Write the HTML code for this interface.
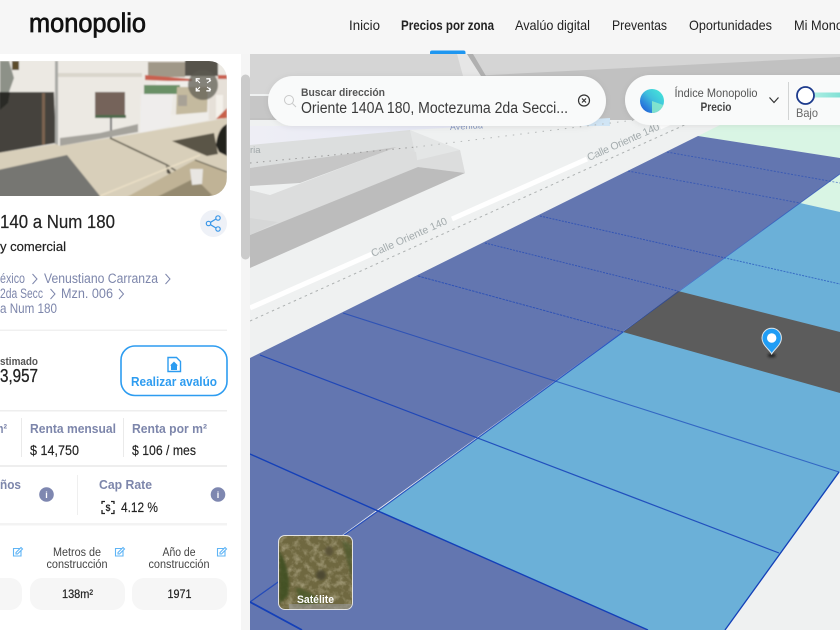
<!DOCTYPE html>
<html lang="es"><head><meta charset="utf-8"><title>Monopolio</title>
<style>
html,body{margin:0;padding:0;width:840px;height:630px;overflow:hidden;background:#fff}
svg{display:block}
text{font-family:"Liberation Sans",sans-serif;fill:#222}
.b{font-weight:700}
.g{fill:#7d86ab}
</style></head><body>
<svg width="840" height="630" viewBox="0 0 840 630" xmlns="http://www.w3.org/2000/svg">
<defs>
<clipPath id="ph"><path d="M-1 61H209a18 18 0 0 1 18 18V178a18 18 0 0 1-18 18H-1z"/></clipPath>
<clipPath id="mp"><rect x="250" y="54" width="590" height="576"/></clipPath>
<clipPath id="st"><rect x="279" y="536" width="73" height="73" rx="6"/></clipPath>
<filter id="bl" x="-5%" y="-5%" width="110%" height="110%"><feGaussianBlur stdDeviation=".8"/></filter>
<filter id="sh" x="-10%" y="-30%" width="120%" height="170%"><feDropShadow dx="0" dy="1" stdDeviation="3" flood-color="#000" flood-opacity=".08"/></filter>
<filter id="soft" x="-100%" y="-100%" width="300%" height="300%"><feGaussianBlur stdDeviation="1.3"/></filter>
<filter id="noise" x="0" y="0" width="100%" height="100%"><feTurbulence type="fractalNoise" baseFrequency=".16" numOctaves="3" seed="7"/><feColorMatrix values="0 0 0 0 .8  0 0 0 0 .74  0 0 0 0 .55  1.9 0 0 0 -.8"/></filter>
<linearGradient id="lav" x1="0" x2="1" y1="0" y2="0"><stop offset="0" stop-color="#eeeef5"/><stop offset=".6" stop-color="#e6e8f6"/><stop offset="1" stop-color="#cfe5f5"/></linearGradient>
<linearGradient id="ci" x1="0" x2="1" y1="1" y2="0"><stop offset="0" stop-color="#1b4fd0"/><stop offset=".25" stop-color="#2a7fdc"/><stop offset=".55" stop-color="#3fc0dd"/><stop offset="1" stop-color="#45ecd8"/></linearGradient>
<linearGradient id="sl" x1="0" x2="1"><stop offset="0" stop-color="#aeeee4"/><stop offset="1" stop-color="#7fe0d4"/></linearGradient>
</defs>

<!-- header -->
<rect width="840" height="54" fill="#f6f6f6"/>
<text x="29" y="32" font-size="26.500" textLength="117" lengthAdjust="spacingAndGlyphs" style="fill:#111;stroke:#111;stroke-width:.7">monopolio</text>
<text x="349" y="30" font-size="14" textLength="31" lengthAdjust="spacingAndGlyphs">Inicio</text>
<text x="401" y="30" font-size="14" class="b" textLength="93" lengthAdjust="spacingAndGlyphs">Precios por zona</text>
<text x="515" y="30" font-size="14" textLength="75" lengthAdjust="spacingAndGlyphs">Avalúo digital</text>
<text x="612" y="30" font-size="14" textLength="55" lengthAdjust="spacingAndGlyphs">Preventas</text>
<text x="689" y="30" font-size="14" textLength="83" lengthAdjust="spacingAndGlyphs">Oportunidades</text>
<text x="794" y="30" font-size="14" textLength="76" lengthAdjust="spacingAndGlyphs">Mi Monopolio</text>

<!-- map -->
<g clip-path="url(#mp)">
<rect x="250" y="54" width="590" height="576" fill="#eff1f1"/>
<rect x="250" y="54" width="590" height="40" fill="#d5d5d5"/>
<path d="M470 76L840 57V125H250V96H470z" fill="#c1c1c1"/>
<path d="M250 96H272V118H250z" fill="#c6c6c6"/>
<path d="M457 54H467L481 76H463z" fill="#e6e6e6"/>
<path d="M467 54H473L486 76H481z" fill="#b0b0b0"/>
<path d="M250 120H840V130L250 146z" fill="#eff1f1"/>
<path d="M250 126H610V118L410 130 250 146z" fill="url(#lav)"/>
<text x="450" y="130" font-size="9" style="fill:#8a9ac0" transform="rotate(-3 450 130)" textLength="33">Avenida</text>
<!-- buildings -->
<path d="M250 145L410 130 416 152 250 168z" fill="#dcdede"/>
<path d="M410 130L460 150 465 173 418 167z" fill="#e4e6e6"/>
<path d="M250 168L397 147 300 183 250 190z" fill="#c6c6c6"/>
<path d="M250 190L270 195 397 147 416 152 418 167 250 235z" fill="#dcdddd"/>
<path d="M270 195L460 150 465 173 418 167 250 235V190z" fill="#dcdddd"/>
<path d="M250 190L270 195 300 183 250 186z" fill="#eef0f0"/>
<path d="M250 235L418 167 465 173 250 268z" fill="#bcbcbc"/>
<path d="M250 218L278 222 250 235z" fill="#d6d7d7"/>
<text x="250" y="153" font-size="9.500" style="fill:#9fa6a8">ria</text>
<path d="M250 163L416 147" stroke="#9a9a9a" stroke-width="1" stroke-dasharray="1.500 5" fill="none"/>
<path d="M416 147L700 112" stroke="#b5b8b8" stroke-width="1" stroke-dasharray="1.500 6" fill="none"/>
<!-- road -->
<path d="M250 308L372 254M452 219L587 159M660 127L720 100" stroke="#fff" stroke-width="5" fill="none"/>
<path d="M250 321L700 118" stroke="#adb1b1" stroke-width="1" stroke-dasharray="2.500 3.500" fill="none"/>
<text x="373" y="257" font-size="10.500" transform="rotate(-24 373 257)" textLength="82" style="fill:#a3abad">Calle Oriente 140</text>
<text x="589" y="161" font-size="10.500" transform="rotate(-24 589 161)" textLength="78" style="fill:#a3abad">Calle Oriente 140</text>
<!-- parcels -->
<path d="M698 136L790 90H840V158z" fill="#d9f5e4"/>
<path d="M800 203L840 174V212z" fill="#d9f5e4"/>
<path d="M698 136L840 158V174L250 602V358z" fill="#6376b0"/>
<path d="M250 602L378 511 648 630H250z" fill="#6376b0"/>
<path d="M800 203L840 212V472L725 630H648L378 511z" fill="#6bb0d8"/>
<path d="M678 291L840 332V393L623 332z" fill="#5c5c5c"/>
<g fill="none" stroke="#1440b8">
<path d="M840 174L623 332" stroke-width=".8" opacity=".65"/>
<path d="M623 332L378 511 250 602" stroke-width="1.200" opacity=".85"/>
<path d="M667 152L840 183M628 171L800 203" stroke-width="1" stroke-dasharray="2 1.500" opacity=".5"/>
<path d="M540 216L840 284M485 243L678 291" stroke-width="1" stroke-dasharray="2 1.200" opacity=".6"/>
<path d="M418 276L623 332" stroke-width="1" stroke-dasharray="2.500 1" opacity=".65"/>
<path d="M343 313L839 472" stroke-width="1.100" opacity=".65"/>
<path d="M260 355L779 553" stroke-width="1.200" opacity=".85"/>
<path d="M250 454L378 511 648 630" stroke-width="1.400"/>
<path d="M250 602L302 630" stroke-width="1.800"/>
<path d="M839 472L725 630" stroke-width="1.300"/>
</g>
<!-- pin -->
<ellipse cx="771.700" cy="355.500" rx="4" ry="2" fill="#222" filter="url(#soft)"/>
<path d="M771.700 354C769.500 349.500 762 345 762 338a9.700 9.700 0 0 1 19.400 0C781.400 345 773.900 349.500 771.700 354z" fill="#1f9df5" stroke="#dfe6ea" stroke-width="1"/>
<circle cx="771.700" cy="338" r="4.700" fill="#fff"/>
</g>

<!-- search panel -->
<rect x="268" y="76" width="338" height="50" rx="25" fill="#f9fafa" filter="url(#sh)"/>
<circle cx="289" cy="100" r="4.500" fill="none" stroke="#c9c9c9" stroke-width="1"/>
<path d="M292.500 103.500L296 107" stroke="#c9c9c9" stroke-width="1"/>
<text x="301" y="96" font-size="11" class="b" textLength="84" lengthAdjust="spacingAndGlyphs" style="fill:#555">Buscar dirección</text>
<text x="301" y="113" font-size="15.500" textLength="267" lengthAdjust="spacingAndGlyphs" style="fill:#3a3a3a">Oriente 140A 180, Moctezuma 2da Secci...</text>
<circle cx="584" cy="100.500" r="5.500" fill="none" stroke="#333" stroke-width="1.200"/>
<path d="M582 98.500L586 102.500M586 98.500L582 102.500" stroke="#333" stroke-width="1.200"/>

<!-- index panel -->
<path d="M650 75H860V125H650a25 25 0 0 1 0-50z" fill="#f9fafa" filter="url(#sh)"/>
<circle cx="652" cy="101" r="12" fill="url(#ci)"/>
<path d="M652 101V113a12 12 0 0 0 11.200-8z" fill="#86e8cc" opacity=".9"/>
<text x="716" y="97" font-size="12" text-anchor="middle" textLength="83" lengthAdjust="spacingAndGlyphs" style="fill:#555">Índice Monopolio</text>
<text x="716" y="111" font-size="11.500" class="b" text-anchor="middle" textLength="31" lengthAdjust="spacingAndGlyphs" style="fill:#444">Precio</text>
<path d="M769.500 97.500L774 102.500 778.500 97.500" fill="none" stroke="#333" stroke-width="1.200"/>
<rect x="788" y="82" width="1" height="38" fill="#d2d4d4"/>
<rect x="812" y="92.500" width="30" height="5" fill="url(#sl)"/>
<circle cx="805.500" cy="95.500" r="8.500" fill="#fff" stroke="#1c3a8c" stroke-width="1.800"/>
<text x="796" y="117" font-size="12" textLength="22" lengthAdjust="spacingAndGlyphs" style="fill:#666">Bajo</text>

<!-- satellite -->
<rect x="278" y="535" width="75" height="75" rx="7" fill="#e3e3e3"/>
<g clip-path="url(#st)">
<rect x="279" y="536" width="73" height="73" fill="#6f6840"/>
<rect x="279" y="536" width="73" height="73" filter="url(#noise)" opacity=".5"/>
<path d="M279 550Q292 572 288 596L279 604z" fill="#3f4f24" opacity=".9" filter="url(#soft)"/>
<path d="M296 588Q310 590 322 603L300 606z" fill="#4c5a2a" opacity=".85" filter="url(#soft)"/>
<path d="M342 540L352 580V545z" fill="#4f5a2e" opacity=".8" filter="url(#soft)"/>
<ellipse cx="321" cy="575" rx="5" ry="5" fill="#4e4a30" filter="url(#soft)"/>
<ellipse cx="329" cy="551" rx="4" ry="5" fill="#5a5338" filter="url(#soft)"/>
<rect x="289" y="604" width="63" height="5" fill="#999" opacity=".6"/>
</g>
<text x="315.500" y="603" font-size="11" class="b" text-anchor="middle" textLength="37" lengthAdjust="spacingAndGlyphs" style="fill:#fff">Satélite</text>

<!-- left panel -->
<rect x="0" y="54" width="241" height="576" fill="#fff"/>
<rect x="241" y="54" width="9" height="576" fill="#f5f5f5"/>
<path d="M241 79a4.500 4.500 0 0 1 9 0V255a4.500 4.500 0 0 1-9 0z" fill="#cbcbcb"/>

<!-- photo -->
<g clip-path="url(#ph)"><g filter="url(#bl)">
<rect x="-2" y="60" width="232" height="138" fill="#ece9e3"/>
<rect x="58" y="73" width="84" height="4" fill="#d9d6cc"/>
<path d="M0 61H9L14 78 9 92H0z" fill="#8d9188"/>
<rect x="12" y="61" width="7" height="9" fill="#5b4c2c"/>
<!-- door -->
<path d="M-2 92H54L56 143-2 153z" fill="#45423c"/>
<path d="M0 92H10L8 103 0 110z" fill="#2a2a26"/>
<rect x="42" y="93" width="3" height="52" fill="#7a6450"/>
<rect x="55" y="61" width="3" height="86" fill="#a8a8a4"/>
<!-- window -->
<rect x="95" y="92" width="30" height="25" fill="#75645a"/>
<rect x="95" y="115" width="31" height="3" fill="#4d6a4c"/>
<rect x="110" y="118" width="2" height="20" fill="#777"/>
<!-- dirty base -->
<path d="M60 146L60 138 100 133 138 124 138 132z" fill="#a5a39c"/>
<!-- right building -->
<path d="M148 62H185V77H148z" fill="#a09888"/>
<path d="M185 60H218V76H185z" fill="#57524c"/>
<path d="M145 75L192 79V82L145 80z" fill="#c9614f"/>
<path d="M156 81H192V87H156z" fill="#f0eeea"/>
<path d="M144 85H180V94H144z" fill="#6a9066"/>
<path d="M177 87H208L207 114 176 116z" fill="#c4ba9f"/>
<path d="M141 94H173L170 126 140 134z" fill="#efedec"/>
<path d="M170 115L208 112V120L170 128z" fill="#efede9"/>
<rect x="178" y="95" width="9" height="11" fill="#a8a296"/>
<path d="M209 90L214 76H227V120H209z" fill="#e6e0d8"/>
<rect x="216" y="95" width="7" height="24" fill="#f4f1ea"/>
<path d="M216 119L227 108V118z" fill="#c8604a"/>
<rect x="218" y="75" width="9" height="4" fill="#c9614f"/>
<circle cx="203" cy="85" r="15" fill="#5c5a50" opacity=".72"/>
<!-- ground -->
<path d="M-2 153L56 144 60 146 140 133 227 118V198H-2z" fill="#d8cfba"/>
<path d="M-2 170L67 155 100 196V198H-2z" fill="#767672"/>
<path d="M172 141L214 133 218 154 207 156z" fill="#5a5546"/>
<path d="M110 138L167 165 213 195" fill="none" stroke="#5a564a" stroke-width="1.500"/>
<path d="M166 165L167 173 190 182 215 196H205L175 179z" fill="#4e4a40"/>
<path d="M125 198L195 160 227 172V198z" fill="#c0b396"/>
<path d="M155 198L195 178 215 198z" fill="#958a70"/>
<path d="M195 160L227 172" fill="none" stroke="#5b5648" stroke-width="1.200"/>
<path d="M100 196L200 155" fill="none" stroke="#eadfc6" stroke-width="1.500"/>
<path d="M216 145Q218 128 227 124V156L219 152z" fill="#22201e"/>
<path d="M190 169L203 169 202 184 192 185z" fill="#e8e6e2"/>
</g></g>
<path d="M198 82V79H201.500M208 79H211.500V82M198 88V91H201.500M208 91H211.500V88" transform="translate(-1.700 -.2)" fill="none" stroke="#fff" stroke-width="1.300"/>
<path d="M197 80L200 83M211 80L207 83M197 90L200 87M211 90L207 87" fill="none" stroke="#fff" stroke-width="1"/>

<text x="0" y="228" font-size="18.500" textLength="115" lengthAdjust="spacingAndGlyphs" style="stroke:#222;stroke-width:.2">140 a Num 180</text>
<circle cx="213.500" cy="223.500" r="13.500" fill="#eef1f7"/>
<g fill="none" stroke="#3a97e8" stroke-width="1.200"><circle cx="208.500" cy="223.500" r="2.200"/><circle cx="218" cy="218" r="2.200"/><circle cx="218" cy="229" r="2.200"/><path d="M210.500 222.300L216 219M210.500 224.700L216 228"/></g>
<text x="0" y="251" font-size="13" textLength="66" lengthAdjust="spacingAndGlyphs" style="stroke:#222;stroke-width:.2">y comercial</text>

<g font-size="13.500">
<text x="0" y="283" class="g" textLength="25" lengthAdjust="spacingAndGlyphs">éxico</text>
<text x="44" y="283" class="g" textLength="114" lengthAdjust="spacingAndGlyphs">Venustiano Carranza</text>
<text x="0" y="298" class="g" textLength="43" lengthAdjust="spacingAndGlyphs">2da Secc</text>
<text x="61" y="298" class="g" textLength="52" lengthAdjust="spacingAndGlyphs">Mzn. 006</text>
<text x="0" y="313" class="g" textLength="57" lengthAdjust="spacingAndGlyphs">a Num 180</text>
</g>
<path d="M32.500 274L37 279 32.500 284M165.500 274L170 279 165.500 284M50.500 289L55 294 50.500 299M119 289L123.500 294 119 299" fill="none" stroke="#7d86ab" stroke-width="1"/>
<rect x="0" y="329.500" width="227" height="1.500" fill="#f0f0f0"/>

<text x="0" y="365" font-size="11" class="b" textLength="38" lengthAdjust="spacingAndGlyphs" style="fill:#555">stimado</text>
<text x="0" y="382" font-size="18" textLength="38" lengthAdjust="spacingAndGlyphs" style="stroke:#222;stroke-width:.3">3,957</text>
<rect x="121" y="346" width="106" height="49.500" rx="14" fill="#fff" stroke="#2d9cf0" stroke-width="1.600"/>
<path d="M168 357.500H176.500L180.500 361.500V371.500H168z" fill="none" stroke="#2d9cf0" stroke-width="1.400"/>
<path d="M174 361.500L178 365.500H177V370H171V365.500H170z" fill="#2d9cf0"/>
<text x="131" y="386" font-size="13" class="b" textLength="86" lengthAdjust="spacingAndGlyphs" style="fill:#2d9cf0">Realizar avalúo</text>
<rect x="0" y="410" width="227" height="1.500" fill="#eeeeee"/>

<rect x="21" y="418" width="1" height="39" fill="#eaeaea"/>
<rect x="123" y="418" width="1" height="39" fill="#eaeaea"/>
<text x="-6" y="433" font-size="13" class="b g" textLength="13" lengthAdjust="spacingAndGlyphs">m²</text>
<text x="30" y="433" font-size="13" class="b g" textLength="86" lengthAdjust="spacingAndGlyphs">Renta mensual</text>
<text x="132" y="433" font-size="13" class="b g" textLength="75" lengthAdjust="spacingAndGlyphs">Renta por m²</text>
<text x="30" y="455" font-size="13.500" textLength="49" lengthAdjust="spacingAndGlyphs" style="stroke:#222;stroke-width:.15">$ 14,750</text>
<text x="132" y="455" font-size="13.500" textLength="64" lengthAdjust="spacingAndGlyphs" style="stroke:#222;stroke-width:.15">$ 106 / mes</text>
<rect x="0" y="465" width="227" height="2" fill="#eeeeee"/>

<text x="0" y="489" font-size="13" class="b g" textLength="21" lengthAdjust="spacingAndGlyphs">ños</text>
<rect x="77" y="475" width="1" height="40" fill="#efefef"/>
<text x="99" y="489" font-size="13" class="b g" textLength="53" lengthAdjust="spacingAndGlyphs">Cap Rate</text>
<circle cx="46.500" cy="494.500" r="7.300" fill="#7e87b0"/>
<circle cx="218" cy="494.500" r="7.300" fill="#7e87b0"/>
<text x="46.500" y="498" font-size="9" class="b" text-anchor="middle" style="fill:#fff">i</text>
<text x="218" y="498" font-size="9" class="b" text-anchor="middle" style="fill:#fff">i</text>
<path d="M102 504V501.500H105M111 501.500H114V504M102 510V513.500H105M111 513.500H114V510" fill="none" stroke="#222" stroke-width="1.300"/>
<text x="108" y="511" font-size="9" text-anchor="middle" class="b">$</text>
<text x="121" y="512" font-size="14" textLength="37" lengthAdjust="spacingAndGlyphs" style="stroke:#222;stroke-width:.15">4.12 %</text>
<rect x="0" y="523" width="227" height="2.500" fill="#f3f3f3"/>

<g fill="none" stroke="#5fb4f5" stroke-width="1.100">
<path d="M20 548.500H13.500V556H21V550.500M16 552.500L21 547.500 22.500 549 17.500 554H16z"/>
<path d="M122 548.500H115.500V556H123V550.500M118 552.500L123 547.500 124.500 549 119.500 554H118z"/>
<path d="M224 548.500H217.500V556H225V550.500M220 552.500L225 547.500 226.500 549 221.500 554H220z"/>
</g>
<g font-size="11.500" text-anchor="middle">
<text x="77" y="556" textLength="48" lengthAdjust="spacingAndGlyphs" style="fill:#444">Metros de</text>
<text x="77" y="568" textLength="61" lengthAdjust="spacingAndGlyphs" style="fill:#444">construcción</text>
<text x="179" y="556" textLength="33" lengthAdjust="spacingAndGlyphs" style="fill:#444">Año de</text>
<text x="179" y="568" textLength="61" lengthAdjust="spacingAndGlyphs" style="fill:#444">construcción</text>
</g>
<rect x="-20" y="578" width="42" height="32" rx="12" fill="#f6f6f6"/>
<rect x="30" y="578" width="95" height="32" rx="12" fill="#f6f6f6"/>
<rect x="132" y="578" width="95" height="32" rx="12" fill="#f6f6f6"/>
<text x="77.500" y="598" font-size="12" text-anchor="middle" textLength="31" lengthAdjust="spacingAndGlyphs" style="stroke:#222;stroke-width:.2">138m²</text>
<text x="179.500" y="598" font-size="12" text-anchor="middle" textLength="24" lengthAdjust="spacingAndGlyphs" style="stroke:#222;stroke-width:.2">1971</text>

<path d="M430 54V52.500a2 2 0 0 1 2-2H463.500a2 2 0 0 1 2 2V54z" fill="#1e96f0"/>
</svg>
</body></html>
